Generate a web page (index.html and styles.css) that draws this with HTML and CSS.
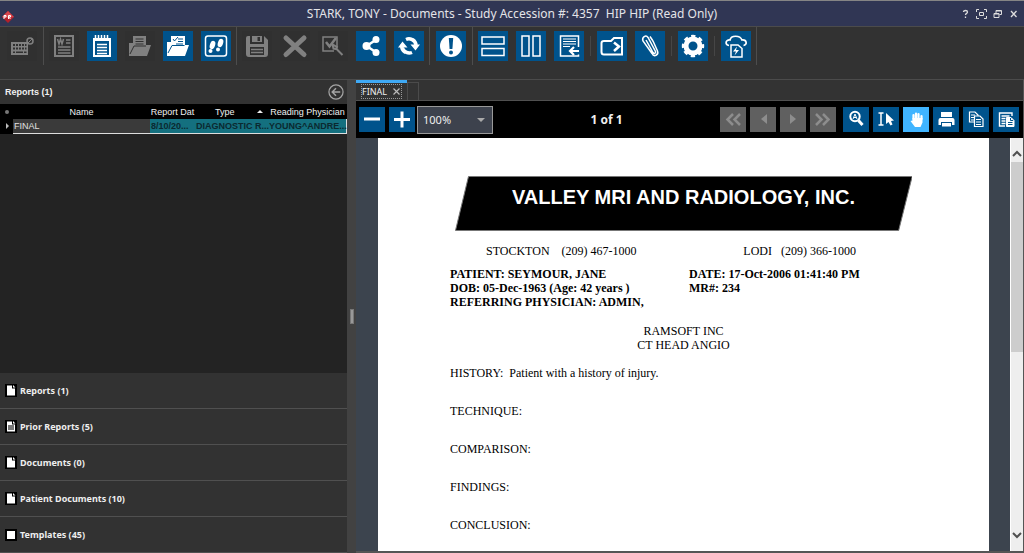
FILE: index.html
```html
<!DOCTYPE html>
<html lang="en">
<head>
<meta charset="utf-8">
<title>STARK, TONY - Documents</title>
<link rel="stylesheet" href="styles.css">
</head>
<body>
<div class="window">
  <header class="titlebar">
    <svg class="app-logo" viewBox="0 0 12 12" aria-hidden="true"><path d="M6 0l6 6-6 6-6-6z" fill="#b3202a"/><path d="M6 0l6 6-6 1-6-1z" fill="#d8454c"/><path d="M2 8V4.500h2v1.500H2M6.500 8V4.500h2v1.500h-2l2 2" fill="none" stroke="#fff"/></svg>
    <h1 class="title">STARK, TONY - Documents - Study Accession #: 4357&nbsp; HIP HIP (Read Only)</h1>
    <div class="window-controls">
      <button class="win" aria-label="Help"><svg viewBox="0 0 11 10"><path d="M3.500 3c0-2 4-2 4 0 0 1.500-2 1.200-2 3M5.500 7.500V9" fill="none" stroke="currentColor" stroke-width="1.300"/></svg></button>
      <button class="win" aria-label="Full screen"><svg viewBox="0 0 11 10"><path d="M3 .5H.5V3M8 .5h2.500V3M3 9.500H.5V7M8 9.500h2.500V7M3.500 3.500h4v3h-4z" fill="none" stroke="currentColor"/></svg></button>
      <button class="win" aria-label="Restore"><svg viewBox="0 0 11 10"><path d="M4 4V1.500h5.500v4H7.500M2 4.500h5v4H2zM4 2h5.500M2 5h5" fill="none" stroke="currentColor"/></svg></button>
      <button class="win" aria-label="Close"><svg viewBox="0 0 11 10"><path d="M3 2l5.500 6M8.500 2L3 8" fill="none" stroke="currentColor" stroke-width="1.300"/></svg></button>
    </div>
  </header>

  <nav class="toolbar" aria-label="Main">
    <div class="group lone">
      <button class="tool" disabled aria-label="Keyboard"><svg viewBox="0 0 30 30"><path fill="currentColor" fill-rule="evenodd" d="M4 11h17v13H4zM6 13v2h2v-2zm3 0v2h2v-2zm3 0v2h2v-2zm3 0v2h2v-2zm3 0v2h1.500v-2zM6 16.500v2h2v-2zm3 0v2h2v-2zm3 0v2h2v-2zm3 0v2h2v-2zm3 0v2h1.500v-2zM6 20.500v1.500h2v-1.500zm3 0v1.500h7v-1.500zm8 0v1.500h2.500v-1.500z"/><circle cx="23" cy="10" r="3" fill="none" stroke="currentColor" stroke-width="1.500"/><path d="M21 12l4-4" stroke="currentColor"/></svg></button>
    </div>
    <span class="sep"></span>
    <div class="group">
      <button class="tool" disabled aria-label="Word document"><svg viewBox="0 0 30 30" fill="none" stroke="currentColor"><path d="M6 5h18v20H6z" stroke-width="2"/><path d="M8.500 8l1.500 5 1.500-5 1.500 5L14.500 8" stroke-width="1.500"/><path d="M17 9h4.500M17 12h4.500M9 16h12.500M9 19h12.500M9 22h12.500" stroke-width="1.500"/></svg></button>
      <button class="tool" aria-label="Notes"><svg viewBox="0 0 30 30" fill="none" stroke="currentColor"><path d="M7 7v18h16V7" stroke-width="2"/><path d="M6 8.500h18" stroke-width="3"/><path d="M8.500 4v6M11.500 4v6M14.500 4v6M17.500 4v6M20.500 4v6" stroke-width="1.500"/><path d="M10 13.500h10M10 16.500h10M10 19.500h10M10 22.500h10" stroke-width="1.500"/></svg></button>
      <button class="tool" disabled aria-label="Open folder"><svg viewBox="0 0 30 30"><path fill="currentColor" d="M4 25V12h4V5h13v9h5l-4 11z"/><path d="M10.500 8h8M10.500 10.500h8M10.500 13h8M5 23l4-8h12" fill="none" stroke="#303030"/></svg></button>
      <button class="tool" aria-label="Review folder"><svg viewBox="0 0 30 30"><path fill="currentColor" d="M4 25V11h4V5h14v9h4l-4 11z"/><path d="M15 8h5M15 10.500h5M13 13h7M10 8l1.500 2L15 6M5 22l4-7.500h12.500" fill="none" stroke="#00538c"/></svg></button>
      <button class="tool" aria-label="Track"><svg viewBox="0 0 30 30"><rect x="4.500" y="5" width="21" height="20" rx="2.500" fill="none" stroke="currentColor" stroke-width="1.500"/><ellipse cx="11.500" cy="14" rx="2.600" ry="4.300" transform="rotate(18 11.500 14)" fill="currentColor"/><circle cx="9.500" cy="20" r="2" fill="currentColor"/><ellipse cx="19.500" cy="12" rx="2.600" ry="4.300" transform="rotate(18 19.500 12)" fill="currentColor"/><circle cx="17" cy="18.500" r="2" fill="currentColor"/></svg></button>
    </div>
    <span class="sep"></span>
    <div class="group">
      <button class="tool" disabled aria-label="Save"><svg viewBox="0 0 30 30"><path fill="currentColor" fill-rule="evenodd" d="M4 7q0-2 2-2h2v8h14V5l4 4v14q0 3-3 3H7q-3 0-3-3zM10 5h10v6H10zM15.500 6v4h2.500V6zM8 16v8h14v-8z"/><path d="M9 18.500h12M9 21.500h12" stroke="currentColor" stroke-width="1.500"/></svg></button>
      <button class="tool" disabled aria-label="Delete"><svg viewBox="0 0 30 30"><path d="M6 7l18 16.500M24 7L6 23.500" stroke="currentColor" stroke-width="5" stroke-linecap="round"/></svg></button>
      <button class="tool" disabled aria-label="Verify"><svg viewBox="0 0 30 30" fill="none" stroke="currentColor"><path d="M19 16V6H5v14h11" stroke-width="1.500"/><path d="M8 11l3.500 4.500L18 7" stroke-width="2.500"/><path d="M14.500 13.500l1 4 3 .5.500-2zM17.500 17l7 7" stroke-width="2"/></svg></button>
      <button class="tool" aria-label="Share"><svg viewBox="0 0 30 30"><path d="M20.500 8.500L10.500 15l10 6.500" fill="none" stroke="currentColor" stroke-width="2.500"/><circle cx="20" cy="8.500" r="3.500" fill="currentColor"/><circle cx="10.500" cy="15" r="4" fill="currentColor"/><circle cx="20" cy="21.500" r="3.500" fill="currentColor"/></svg></button>
      <button class="tool" aria-label="Refresh"><svg viewBox="0 0 30 30"><path d="M11.500 21.500A7.300 7.300 0 0 1 8 14M12 8.500a7.300 7.300 0 0 1 10 5M18.500 8.500A7.300 7.300 0 0 1 22 15M18 21.500a7.300 7.300 0 0 1-9.500-4" fill="none" stroke="currentColor" stroke-width="3.500"/><path d="M16.500 13.500h9.500l-4.500 6zM4 16.500h9.500l-5-6z" fill="currentColor"/></svg></button>
    </div>
    <span class="sep"></span>
    <div class="group lone">
      <button class="tool" aria-label="Priority"><svg viewBox="0 0 30 30"><circle cx="15" cy="15" r="11" fill="currentColor"/><path d="M12.800 7h4.400l-.8 11h-2.800z" fill="#00538c"/><circle cx="15" cy="21.500" r="2" fill="#00538c"/></svg></button>
    </div>
    <span class="sep"></span>
    <div class="group">
      <button class="tool" aria-label="Split rows"><svg viewBox="0 0 30 30"><path d="M4 6h22v7H4zM4 17.500h22v7H4z" fill="none" stroke="currentColor" stroke-width="1.500"/></svg></button>
      <button class="tool" aria-label="Split columns"><svg viewBox="0 0 30 30"><path d="M6 5h7v20H6zM17 5h7v20h-7z" fill="none" stroke="currentColor" stroke-width="1.500"/></svg></button>
      <button class="tool" aria-label="Insert text"><svg viewBox="0 0 30 30" fill="none" stroke="currentColor"><path d="M24.500 16V5h-18v20h18v-1.500" stroke-width="1.500"/><path d="M9 8h13M9 10.500h13M9 13h13M9 15.500h7" stroke-width="1.200"/><path d="M25 20h-8M20 16l-4 4 4 4" stroke-width="2.200"/></svg></button>
    </div>
    <span class="sep short"></span>
    <div class="group">
      <button class="tool" aria-label="Export"><svg viewBox="0 0 30 30" fill="none" stroke="currentColor" stroke-width="2"><path d="M25 23.500H7q-2.500 0-2.500-2.500v-9Q4.500 10 7 10h7l3-3h8z"/><path d="M17 11.500l5 4-5 4.500" stroke-width="2.500"/></svg></button>
      <button class="tool" aria-label="Attach"><svg viewBox="0 0 30 30" fill="none" stroke="currentColor" stroke-width="1.500"><path d="M18 10l4.500 10c1.500 4-3.500 6.500-5.500 2.500L8 10C6.500 6 11 3.500 13 6.500l7.500 14c.5 2-1.500 2.500-2.500 1L11 9M15 5.500l3 4.500"/></svg></button>
    </div>
    <span class="sep short"></span>
    <div class="group">
      <button class="tool" aria-label="Settings"><svg viewBox="0 0 30 30"><circle cx="15" cy="15" r="7" fill="none" stroke="currentColor" stroke-width="5"/><circle cx="15" cy="15" r="9.700" fill="none" stroke="currentColor" stroke-width="3" stroke-dasharray="4.200 3.418" stroke-dashoffset="2.100"/></svg></button>
    </div>
    <span class="sep short"></span>
    <div class="group">
      <button class="tool" aria-label="Cloud sync"><svg viewBox="0 0 30 30"><path d="M8 14.500c-4-.5-4-6 1-5.500 1-5 10-5 12 0 5-.5 5.500 5 1.500 5.500" fill="none" stroke="currentColor" stroke-width="1.700"/><path d="M10 14h7l4 3.500V26H10z" fill="none" stroke="currentColor" stroke-width="1.500"/><path d="M16 15.500l-4 5h3l-1.500 4 4.500-5.500h-3z" fill="currentColor"/></svg></button>
    </div>
    <span class="sep"></span>
  </nav>

  <div class="workspace">
    <aside class="sidebar">
      <div class="panel-head">
        <h2 class="panel-title">Reports (1)</h2>
        <button class="collapse" aria-label="Collapse"><svg viewBox="0 0 17 17" fill="none" stroke="currentColor"><circle cx="8.500" cy="8.500" r="7.500" stroke-width="1.300"/><path d="M13 8.500H5M8.500 4.500l-4 4 4 4" stroke-width="1.600"/></svg></button>
      </div>
      <table class="reports">
        <thead>
          <tr><th class="c-mark"><span class="star"></span></th><th class="c-name">Name</th><th class="c-date">Report Dat</th><th class="c-type"><span class="sort-head">Type<i class="sort"></i></span></th><th class="c-doc">Reading Physician</th></tr>
        </thead>
        <tbody>
          <tr><td class="mark"><i class="pointer"></i></td><td class="focus">FINAL</td><td>8/10/20...</td><td>DIAGNOSTIC R...</td><td class="last">YOUNG^ANDRE...</td></tr>
        </tbody>
      </table>
      <div class="filler"></div>
      <nav class="sections" aria-label="Sections">
        <a class="section" href="#reports"><svg class="doc" viewBox="0 0 12 13"><path d="M0 0h12v13H0z" fill="#000"/><path d="M2 1.500h5v3h3v7H2zM8 1l2.500 2.500H8z" fill="#fff"/></svg>Reports (1)</a>
        <a class="section" href="#prior"><svg class="doc" viewBox="0 0 12 13"><path d="M0 0h12v13H0z" fill="#000"/><path d="M2 1.500h5v3h3v7H2zM8 1l2.500 2.500H8z" fill="#fff"/><path d="M3 5h6v5H3z" fill="#777"/></svg>Prior Reports (5)</a>
        <a class="section" href="#documents"><svg class="doc" viewBox="0 0 12 13"><path d="M0 0h12v13H0z" fill="#000"/><path d="M2 1.500h5v3h3v7H2zM8 1l2.500 2.500H8z" fill="#fff"/></svg>Documents (0)</a>
        <a class="section" href="#patient"><svg class="doc" viewBox="0 0 12 13"><path d="M0 0h12v13H0z" fill="#000"/><path d="M2 1.500h5v3h3v7H2zM8 1l2.500 2.500H8z" fill="#fff"/></svg>Patient Documents (10)</a>
        <a class="section" href="#templates"><svg class="doc" viewBox="0 0 12 13"><path d="M0 1h12v12H0z" fill="#000"/><path d="M2 3h8v8H2z" fill="#fff"/></svg>Templates (45)</a>
      </nav>
    </aside>
    <div class="splitter"><span class="grip"></span></div>
    <main class="viewer">
      <div class="tabs">
        <div class="tab"><span class="tab-box">FINAL<button class="tab-close" aria-label="Close tab"><svg viewBox="0 0 7 7"><path d="M.5.5l6 6M6.500.5l-6 6" stroke="currentColor" stroke-width="1.200"/></svg></button></span></div>
        <div class="tab-empty"></div>
      </div>
      <div class="viewbar">
        <div class="buttons">
          <button class="view" aria-label="Zoom out"><svg viewBox="0 0 26 25"><path d="M5 12h16" stroke="currentColor" stroke-width="3"/></svg></button>
          <button class="view" aria-label="Zoom in"><svg viewBox="0 0 26 25"><path d="M5 12.500h16M13 4.500v16" stroke="currentColor" stroke-width="3"/></svg></button>
        </div>
        <div class="zoom-wrap">
          <select class="zoom" aria-label="Zoom level"><option>100%</option></select>
        </div>
        <span class="page-count">1 of 1</span>
        <div class="buttons pager">
          <button class="view" disabled aria-label="First page"><svg viewBox="0 0 26 25"><path d="M13 7l-5.500 5.500L13 18M20 7l-5.500 5.500L20 18" fill="none" stroke="currentColor" stroke-width="2.500"/></svg></button>
          <button class="view" disabled aria-label="Previous page"><svg viewBox="0 0 26 25"><path d="M17 7v10l-6-5z" fill="currentColor"/></svg></button>
          <button class="view" disabled aria-label="Next page"><svg viewBox="0 0 26 25"><path d="M10 7v10l6-5z" fill="currentColor"/></svg></button>
          <button class="view" disabled aria-label="Last page"><svg viewBox="0 0 26 25"><path d="M6 7l5.500 5.500L6 18M13 7l5.500 5.500L13 18" fill="none" stroke="currentColor" stroke-width="2.500"/></svg></button>
        </div>
        <div class="buttons">
          <button class="view" aria-label="Find text"><svg viewBox="0 0 26 25" fill="none" stroke="currentColor"><circle cx="12" cy="9.500" r="4.700" stroke-width="2"/><path d="M10 12l2-5 2 5M11 10.500h2"/><path d="M15.500 13.500l4 4.500" stroke-width="3"/></svg></button>
          <button class="view" aria-label="Select text"><svg viewBox="0 0 26 25"><path d="M5.500 6h5M5.500 18h5M8 6v12" stroke="currentColor" stroke-width="1.500"/><path d="M13 6v11l2.500-2 2 3.500 2-1-1.500-3.500 3-.5z" fill="currentColor"/></svg></button>
          <button class="view on" aria-label="Pan"><svg viewBox="0 0 26 25"><path d="M10.500 12V8M13 11V6.500M15.500 11V7M18.500 12V9" stroke="currentColor" stroke-width="2.200" stroke-linecap="round"/><path d="M9.500 11h10v4.500L17.500 20H12l-4.500-6 2-.5z" fill="currentColor"/></svg></button>
          <button class="view" aria-label="Print"><svg viewBox="0 0 26 25"><path fill="currentColor" d="M8 5h11v5H8zM5.500 13q0-2 2-2h12q2 0 2 2v5H19v-3H8v3H5.500zM9 16h9v3.500H9z"/></svg></button>
          <button class="view" aria-label="Copy pages"><svg viewBox="0 0 26 25" fill="none" stroke="currentColor" stroke-width="1.200"><path d="M12 15H6.500V5H12l3 3v1M8 8h4M8 10.500h3M8 13h3"/><path d="M11.500 9H17l3 3v7.500h-8.500zM13 12.500h5M13 15h5M13 17.500h5"/></svg></button>
          <button class="view" aria-label="Copy report"><svg viewBox="0 0 26 25" fill="none" stroke="currentColor"><path d="M12 19H6.500V6H19v3M8.500 9h8M8.500 11.500h4M8.500 14h4M8.500 16.500h4" stroke-width="1.400"/><path d="M13.500 10.500H18l3 3v6h-7.500z" fill="currentColor"/><path d="M15 15.500h4.500M15 17.500h4.500M17.500 11v2.500H20" stroke="#00538c"/></svg></button>
        </div>
      </div>
      <div class="canvas">
        <article class="page">
          <div class="letterhead">
            <svg class="banner" viewBox="0 0 458 55" preserveAspectRatio="none" aria-hidden="true"><path d="M13.500.5h444L444 54.500H.5z" fill="#000" stroke="#777"/></svg>
            <h3 class="clinic">VALLEY MRI AND RADIOLOGY, INC.</h3>
          </div>
          <div class="phones"><span>STOCKTON &nbsp;&nbsp; (209) 467-1000</span><span>LODI &nbsp; (209) 366-1000</span></div>
          <div class="facts">
            <div>PATIENT: SEYMOUR, JANE<br>DOB: 05-Dec-1963 (Age: 42 years )<br>REFERRING PHYSICIAN: ADMIN,</div>
            <div>DATE: 17-Oct-2006 01:41:40 PM<br>MR#: 234</div>
          </div>
          <div class="exam">RAMSOFT INC<br>CT HEAD ANGIO</div>
          <p class="para">HISTORY:&nbsp; Patient with a history of injury.</p>
          <p class="para">TECHNIQUE:</p>
          <p class="para">COMPARISON:</p>
          <p class="para">FINDINGS:</p>
          <p class="para">CONCLUSION:</p>
        </article>
        <div class="scrollbar" aria-hidden="true">
          <svg class="arrow" viewBox="0 0 12 24"><path d="M2 18l4-4 4 4" fill="none" stroke="#505050" stroke-width="2"/></svg>
          <span class="thumb"></span>
          <span class="track"></span>
          <svg class="arrow" viewBox="0 0 12 24"><path d="M2 6l4 4 4-4" fill="none" stroke="#505050" stroke-width="2"/></svg>
        </div>
      </div>
    </main>
  </div>
</div>
</body>
</html>
```
FILE: styles.css
```css
* { box-sizing: border-box; }
body { margin: 0; background: #333; color: #f0f0f0; font: 10px/14px "Noto Sans", "Open Sans", sans-serif; }
button { padding: 0; border: 0; background: none; color: inherit; font: inherit; }
svg { display: block; }
h1, h2, h3, p { margin: 0; }

.window { display: flex; flex-direction: column; height: 100vh; overflow: hidden; }

.titlebar { display: grid; grid-template-columns: 64px 1fr 64px; align-items: center; height: 26px; border-top: 1px solid #858585; background: #303654; }
.app-logo { width: 12px; height: 12px; margin: 6px 0 0 2px; }
.title { font-size: 12px; line-height: 18px; font-weight: 400; text-align: center; color: #e4e4e8; white-space: nowrap; }
.window-controls { display: flex; gap: 5px; color: #ddd; }
.win { width: 11px; height: 10px; }
.win svg { width: 11px; height: 10px; }

.toolbar { display: flex; align-items: flex-start; height: 54px; padding-left: 6px; border: 1px solid #4b4b4b; border-width: 1px 0; background: #323232; }
.group { display: flex; gap: 8px; padding-top: 4px; }
.lone { margin: 0 1px; }
.sep { width: 1px; height: 38px; margin: 0 5px; background: #4d4d4d; }
.short { height: 20px; margin: 9px 6px 0; background: #464646; }
.tool { width: 30px; height: 30px; background: #00538c; color: #fff; }
.tool:disabled { background: #303030; color: #808080; }

.workspace { display: flex; flex: 1; min-height: 0; }
.sidebar { display: flex; flex-direction: column; width: 347px; background: #323232; }
.panel-head { display: flex; align-items: center; justify-content: space-between; height: 24px; padding: 0 3px 0 5px; }
.panel-title { font: bold 9px/14px "Liberation Sans", sans-serif; }
.collapse, .collapse svg { width: 16px; height: 16px; color: #a5a5a5; }

.reports { width: 100%; table-layout: fixed; border-collapse: separate; border-spacing: 0; font: 9px/14px "Liberation Sans", sans-serif; }
.reports th, .reports td { height: 15px; padding: 0; white-space: nowrap; }
.reports th { background: #000; font-weight: 400; }
.reports td { background: #14707f; color: #0b2930; font-weight: 700; border: 1px solid #ddd; border-width: 0 0 1px; padding-left: 1px; }
.reports .mark { background: #000; border-color: #000; padding-left: 6px; }
.reports .focus { background: #3a3a3a; color: #e0e0e0; font-weight: 400; }
.reports .last { border-right-width: 1px; }
.c-mark { width: 13px; }
.c-name { width: 137px; }
.c-date { width: 45px; }
.c-type { width: 73px; }
.star { display: block; width: 4px; height: 4px; margin-left: 5px; border-radius: 2px; background: #777; }
.sort-head { display: flex; align-items: center; gap: 22px; padding-left: 20px; }
.sort { border: 3px solid transparent; border-top: 0; border-bottom: 3px solid #eee; }
.pointer { display: block; width: 0; border: 3px solid transparent; border-left-color: #bbb; border-right: 0; }
.filler { flex: 1; background: #232323; }
.section { display: flex; align-items: center; gap: 3px; height: 36px; padding-left: 5px; border-bottom: 1px solid #505050; color: #eee; font-size: 9px; font-weight: 700; text-decoration: none; }
.doc { width: 12px; height: 13px; }

.splitter { display: flex; align-items: center; justify-content: center; width: 9px; background: #424242; }
.grip { width: 4px; height: 15px; background: #999; border: 1px solid #777; }

.viewer { display: flex; flex: 1; flex-direction: column; min-width: 0; border: 1px solid #555; border-width: 0 1px 2px 0; }
.tabs { display: flex; height: 21px; border-bottom: 1px solid #505050; }
.tab { padding: 1px 5px 0; border-top: 3px solid #3fa9f5; font: 9px/13px "Noto Sans", sans-serif; }
.tab-box { display: flex; align-items: center; gap: 6px; height: 15px; border: 1px dotted #999; padding-right: 1px; }
.tab-close, .tab-close svg { width: 7px; height: 7px; color: #bbb; }
.tab-empty { width: 12px; margin-top: 2px; border: 1px solid #4b4b4b; border-bottom: 0; }

.viewbar { display: flex; align-items: center; height: 37px; padding: 0 4px 0 3px; background: #000; }
.buttons { display: flex; gap: 4px; }
.pager { margin-right: 7px; }
.view { width: 26px; height: 25px; background: #00538c; color: #fff; }
.view:disabled { background: #606060; color: #8d8d8d; }
.view.on { background: #40b4ff; }
.zoom-wrap { position: relative; width: 76px; height: 28px; margin-left: 2px; }
.zoom-wrap::after { content: ""; position: absolute; right: 8px; top: 12px; border: 4px solid transparent; border-top-color: #aaa; border-bottom: 0; pointer-events: none; }
.zoom { appearance: none; width: 100%; height: 100%; padding: 0 5px; border: 1px solid #999; border-radius: 0; background: #3d424d; color: #eee; font: 11px/16px "Noto Sans", sans-serif; }
.page-count { flex: 1; text-align: center; font-size: 12px; font-weight: 700; }

.canvas { display: flex; flex: 1; min-height: 0; padding-left: 22px; background: #3c444e; }
.page { flex: 1; margin-right: 21px; padding: 38px 72px 0; background: #fff; color: #000; font: 12px/14px "Liberation Serif", serif; overflow: hidden; }
.letterhead { display: grid; width: 98%; margin: 0 auto; }
.letterhead > * { grid-area: 1 / 1; }
.banner { width: 100%; height: 55px; }
.clinic { position: relative; padding-top: 9px; color: #fff; font: bold 20px/24px "Liberation Sans", sans-serif; text-align: center; }
.phones { display: flex; justify-content: space-between; padding: 13px 61px 9px 36px; }
.facts { display: grid; grid-template-columns: 239px 1fr; font-weight: 700; }
.exam { margin: 15px 0 14px; text-align: center; }
.para { margin-bottom: 24px; }

.scrollbar { display: flex; flex-direction: column; width: 13px; border-left: 1px solid #fff; background: #eee; }
.arrow { width: 12px; height: 24px; }
.thumb { height: 190px; background: #cdcdcd; }
.track { flex: 1; }
```
